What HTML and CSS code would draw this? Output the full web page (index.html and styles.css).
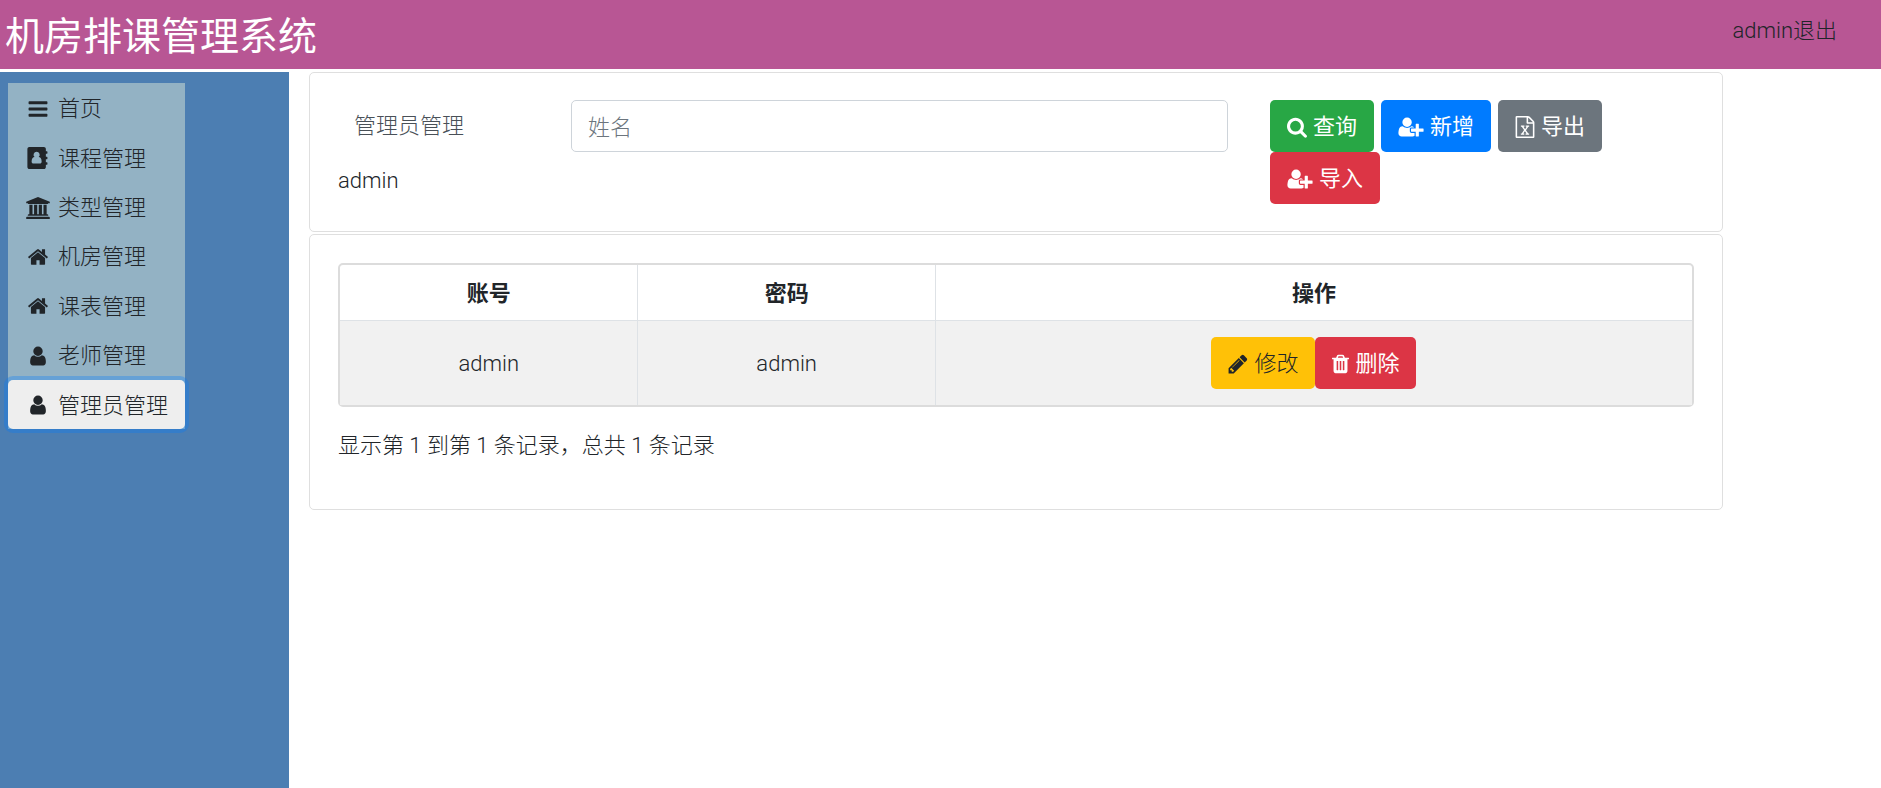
FILE: index.html
```html
<!DOCTYPE html>
<html lang="zh-CN">
<head>
    <meta charset="UTF-8">
    <meta name="viewport" content="width=device-width, initial-scale=1.0">
    <title>机房排课管理系统</title>
    <link rel="stylesheet" href="styles.css">
</head>
<body>
    <svg class="sprite" aria-hidden="true">
        <symbol id="bars" viewBox="0 0 1792 1792"><path d="M1664 1344v128q0 26-19 45t-45 19h-1408q-26 0-45-19t-19-45v-128q0-26 19-45t45-19h1408q26 0 45 19t19 45zm0-512v128q0 26-19 45t-45 19h-1408q-26 0-45-19t-19-45v-128q0-26 19-45t45-19h1408q26 0 45 19t19 45zm0-512v128q0 26-19 45t-45 19h-1408q-26 0-45-19t-19-45v-128q0-26 19-45t45-19h1408q26 0 45 19t19 45z"/></symbol>
        <symbol id="book" viewBox="0 0 1792 1792"><path fill-rule="evenodd" d="M192 0h1184q66 0 113 47t47 113v192h96q32 0 32 32v128q0 32-32 32h-96v256h96q32 0 32 32v128q0 32-32 32h-96v256h96q32 0 32 32v128q0 32-32 32h-96v192q0 66-47 113t-113 47h-1184q-66 0-113-47t-47-113v-1472q0-66 47-113t113-47zM784 384a250 250 0 0 0-170 434q-95 5-160 75-78 90-78 285 0 80 42 128t106 48h520q64 0 106-48t42-128q0-195-78-285-65-70-160-75a250 250 0 0 0-170-434z"/></symbol>
        <symbol id="university" viewBox="0 0 1920 1792"><path d="M960 0l960 384v128h-128q0 26-20.5 45t-48.5 19h-1526q-28 0-48.5-19t-20.5-45h-128v-128zm-704 640h256v768h128v-768h256v768h128v-768h256v768h128v-768h256v768h59q28 0 48.5 19t20.5 45v64h-1664v-64q0-26 20.5-45t48.5-19h59v-768zm1595 960q28 0 48.5 19t20.5 45v128h-1920v-128q0-26 20.5-45t48.5-19h1782z"/></symbol>
        <symbol id="home" viewBox="0 0 1792 1792"><path d="M1472 992v480q0 26-19 45t-45 19h-384v-384h-256v384h-384q-26 0-45-19t-19-45v-480q0-1 .5-3t.5-3l575-474 575 474q1 2 1 6zm223-69l-62 74q-8 9-21 11h-3q-13 0-21-7l-692-577-692 577q-12 8-24 7-13-2-21-11l-62-74q-8-10-7-23.5t11-21.5l719-599q32-26 76-26t76 26l244 204v-195q0-14 9-23t23-9h192q14 0 23 9t9 23v408l219 182q10 8 11 21.5t-7 23.5z"/></symbol>
        <symbol id="user" viewBox="0 0 1792 1792"><path d="M1536 1399q0 109-62.5 187t-150.5 78h-854q-88 0-150.5-78t-62.5-187q0-85 8.5-160.5t31.5-152 58.5-131 94-89 134.5-34.5q131 128 313 128t313-128q76 0 134.5 34.5t94 89 58.5 131 31.5 152 8.5 160.5zm-256-887q0 159-112.5 271.5t-271.5 112.5-271.5-112.5-112.5-271.5 112.5-271.5 271.5-112.5 271.5 112.5 112.5 271.5z"/></symbol>
        <symbol id="search" viewBox="64 0 1664 1792"><path d="M1216 832q0-185-131.5-316.5t-316.5-131.5-316.5 131.5-131.5 316.5 131.5 316.5 316.5 131.5 316.5-131.5 131.5-316.5zm512 832q0 52-38 90t-90 38q-54 0-90-38l-343-342q-179 124-399 124-143 0-273.5-55.5t-225-150-150-225-55.5-273.5 55.5-273.5 150-225 225-150 273.5-55.5 273.5 55.5 225 150 150 225 55.5 273.5q0 220-124 399l343 343q37 37 37 90z"/></symbol>
        <symbol id="user-plus" viewBox="0 0 2048 1792"><path d="M704 896q-159 0-271.5-112.5t-112.5-271.5 112.5-271.5 271.5-112.5 271.5 112.5 112.5 271.5-112.5 271.5-271.5 112.5zm960 128h352q13 0 22.5 9.5t9.5 22.5v192q0 13-9.5 22.5t-22.5 9.5h-352v352q0 13-9.5 22.5t-22.5 9.5h-192q-13 0-22.5-9.5t-9.5-22.5v-352h-352q-13 0-22.5-9.5t-9.5-22.5v-192q0-13 9.5-22.5t22.5-9.5h352v-352q0-13 9.5-22.5t22.5-9.5h192q13 0 22.5 9.5t9.5 22.5v352zm-736 224q0 52 38 90t90 38h256v238q-68 50-171 50h-874q-121 0-194-69t-73-190q0-53 3.5-103.5t14-109 26.5-108.5 43-97.5 62-81 85.5-53.5 111.5-20q19 0 39 17 79 61 154.5 91.5t164.5 30.5 164.5-30.5 154.5-91.5q20-17 39-17 132 0 217 96h-223q-52 0-90 38t-38 90v192z"/></symbol>
        <symbol id="excel" viewBox="128 0 1536 1792"><path d="M1596 380q28 28 48 76t20 88v1152q0 40-28 68t-68 28h-1344q-40 0-68-28t-28-68v-1600q0-40 28-68t68-28h896q40 0 88 20t76 48zm-444-244v376h376q-10-29-22-41l-313-313q-12-12-41-22zm384 1528v-1024h-416q-40 0-68-28t-28-68v-416h-768v1536h1280zm-979-234v106h281v-106h-75l103-161q5-7 10-16.5t7.5-13.5 3.5-4h2q1 4 5 10 2 4 4.5 7.5t6 8 6.5 8.5l107 161h-76v106h291v-106h-68l-192-273 195-282h67v-107h-279v107h74l-103 159q-4 7-10 16.5t-9 13.5l-2 3h-2q-1-4-5-10-6-11-17-23l-106-159h76v-107h-290v107h68l189 272-194 283h-68z"/></symbol>
        <symbol id="pencil" viewBox="128 0 1536 1792"><path d="M491 1536l91-91-235-235-91 91v107h128v128h107zm523-928q0-22-22-22-10 0-17 7l-542 542q-7 7-7 17 0 22 22 22 10 0 17-7l542-542q7-7 7-17zm-54-192l416 416-832 832h-416v-416zm683 96q0 53-37 90l-166 166-416-416 166-165q36-38 90-38 53 0 91 38l235 234q37 39 37 91z"/></symbol>
        <symbol id="trash" viewBox="192 0 1408 1792"><path d="M704 1376v-704q0-14-9-23t-23-9h-64q-14 0-23 9t-9 23v704q0 14 9 23t23 9h64q14 0 23-9t9-23zm256 0v-704q0-14-9-23t-23-9h-64q-14 0-23 9t-9 23v704q0 14 9 23t23 9h64q14 0 23-9t9-23zm256 0v-704q0-14-9-23t-23-9h-64q-14 0-23 9t-9 23v704q0 14 9 23t23 9h64q14 0 23-9t9-23zm-544-992h448l-48-117q-7-9-17-11h-317q-10 2-17 11zm928 32v64q0 14-9 23t-23 9h-96v948q0 83-47 143.5t-113 60.5h-832q-66 0-113-58.5t-47-141.5v-952h-96q-14 0-23-9t-9-23v-64q0-14 9-23t23-9h309l70-167q15-37 54-63t79-26h320q40 0 79 26t54 63l70 167h309q14 0 23 9t9 23z"/></symbol>
    </svg>
    <header class="header">
        <h1 class="title">机房排课管理系统</h1>
        <div class="account">admin<a href="#">退出</a></div>
    </header>
    <div class="main">
        <nav class="sidebar">
            <div class="menu">
                <button type="button" class="menu-item"><svg class="icon-fw"><use href="#bars"/></svg>首页</button>
                <button type="button" class="menu-item"><svg class="icon-fw"><use href="#book"/></svg>课程管理</button>
                <button type="button" class="menu-item"><svg class="icon-fw"><use href="#university"/></svg>类型管理</button>
                <button type="button" class="menu-item"><svg class="icon-fw"><use href="#home"/></svg>机房管理</button>
                <button type="button" class="menu-item"><svg class="icon-fw"><use href="#home"/></svg>课表管理</button>
                <button type="button" class="menu-item"><svg class="icon-fw"><use href="#user"/></svg>老师管理</button>
                <button type="button" class="menu-item active"><svg class="icon-fw"><use href="#user"/></svg>管理员管理</button>
            </div>
        </nav>
        <main class="content">
            <section class="card">
                <form class="toolbar">
                    <div class="col">
                        <label class="label" for="name">管理员管理</label>
                        <div>admin</div>
                    </div>
                    <div class="col">
                        <input type="text" class="input" id="name" placeholder="姓名">
                    </div>
                    <div class="col buttons">
                        <button type="button" class="btn btn-success"><svg class="icon icon-md"><use href="#search"/></svg>查询</button>
                        <button type="button" class="btn btn-primary"><svg class="icon icon-lg"><use href="#user-plus"/></svg>新增</button>
                        <button type="button" class="btn btn-secondary"><svg class="icon icon-md"><use href="#excel"/></svg>导出</button>
                        <button type="button" class="btn btn-danger"><svg class="icon icon-lg"><use href="#user-plus"/></svg>导入</button>
                    </div>
                </form>
            </section>
            <section class="card list">
                <table class="table">
                    <thead>
                        <tr>
                            <th class="col-narrow">账号</th>
                            <th class="col-narrow">密码</th>
                            <th>操作</th>
                        </tr>
                    </thead>
                    <tbody>
                        <tr>
                            <td>admin</td>
                            <td>admin</td>
                            <td>
                                <div class="actions">
                                    <button type="button" class="btn btn-warning"><svg class="icon icon-md"><use href="#pencil"/></svg>修改</button>
                                    <button type="button" class="btn btn-danger"><svg class="icon icon-sm"><use href="#trash"/></svg>删除</button>
                                </div>
                            </td>
                        </tr>
                    </tbody>
                </table>
                <div class="total">显示第 1 到第 1 条记录，总共 1 条记录</div>
            </section>
        </main>
    </div>
</body>
</html>
```

FILE: styles.css
```css
*{
    box-sizing: border-box;
}
body{
    margin: 0;
    min-height: 100vh;
    display: flex;
    flex-direction: column;
    font-family: Roboto, "Noto Sans CJK SC", sans-serif;
    font-size: 22px;
    font-weight: 300;
    line-height: 33px;
    color: #212529;
    background-color: #fff;
}
button,input{
    font: inherit;
    color: inherit;
}
svg{
    fill: currentColor;
    flex: none;
}
.sprite{
    display: none;
}
.header{
    display: flex;
    justify-content: space-between;
    padding: 14px 44px 9px 5px;
    margin-bottom: 3px;
    background-color: #b85694;
}
.title{
    margin: 0;
    font-size: 39px;
    font-weight: 400;
    line-height: 46px;
    color: #fff;
}
.account a{
    color: inherit;
    text-decoration: none;
}
.main{
    flex: 1;
    display: flex;
}
.sidebar{
    width: 289px;
    padding: 11px 8px;
    background-color: #4c7eb2;
}
.menu{
    display: grid;
    grid-auto-rows: 1fr;
    width: 177px;
    min-height: 346px;
    background-color: #93b2c4;
}
.menu-item{
    display: flex;
    align-items: center;
    gap: 6px;
    padding: 2px 0 0 16px;
    border: 0;
    background-color: transparent;
    white-space: nowrap;
    cursor: pointer;
}
.menu-item.active{
    border-radius: 5px;
    background-color: #eee;
    box-shadow: 0 0 0 4px rgba(0,123,255,.3);
}
.icon-fw{
    width: 28px;
    height: 22px;
}
.content{
    flex: 1;
    padding: 0 158px 0 20px;
}
.card{
    padding: 27px 28px;
    margin-bottom: 2px;
    border: 1px solid #dfdfdf;
    border-radius: 5px;
}
.toolbar{
    display: grid;
    grid-template-columns: 2fr 6fr 4fr;
    margin: 0 -21px;
}
.col{
    padding: 0 21px;
}
.label{
    display: block;
    padding: 9px 0 22px 16px;
    color: #495057;
}
.input{
    display: block;
    width: 100%;
    height: 52px;
    padding: 2px 16px 0;
    border: 1px solid #ced4da;
    border-radius: 5px;
}
.input::placeholder{
    color: #6c757d;
}
.buttons{
    display: flex;
    flex-wrap: wrap;
    column-gap: 7px;
}
.btn{
    display: flex;
    align-items: center;
    gap: 6px;
    height: 52px;
    padding: 1px 17px 0;
    border: 0;
    border-radius: 5px;
    color: #fff;
    font-weight: 400;
    cursor: pointer;
}
.btn-success{
    background-color: #28a745;
}
.btn-primary{
    background-color: #007bff;
}
.btn-secondary{
    background-color: #6c757d;
}
.btn-danger{
    background-color: #dc3545;
}
.btn-warning{
    background-color: #ffc107;
    color: #212529;
    font-weight: 300;
}
.icon{
    height: 22px;
}
.icon-sm{
    width: 17px;
}
.icon-md{
    width: 20px;
}
.icon-lg{
    width: 26px;
}
.list{
    padding: 28px 28px 47px;
}
.table{
    width: 100%;
    table-layout: fixed;
    border: 2px solid #dcdcdc;
    border-radius: 5px;
    border-spacing: 0;
    text-align: center;
}
.table th{
    padding: 12px 11px 10px;
    font-weight: 700;
}
.table td{
    padding: 16px;
    border-top: 1px solid #dee2e6;
    background-color: #f1f1f1;
}
.table th+th,.table td+td{
    border-left: 1px solid #dee2e6;
}
.col-narrow{
    width: 22%;
}
.actions{
    display: flex;
    justify-content: center;
}
.total{
    margin-top: 22px;
}
```
